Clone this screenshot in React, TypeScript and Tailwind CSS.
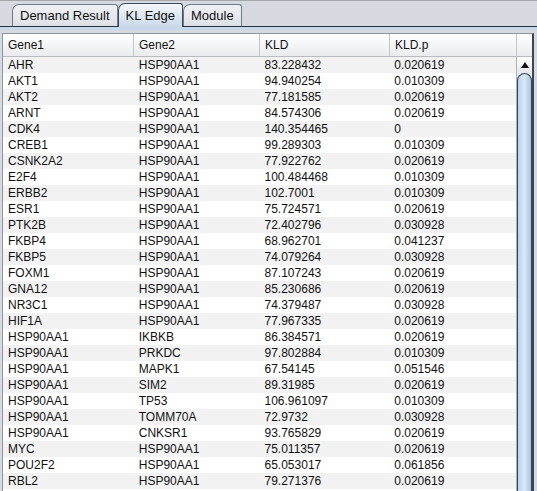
import React from 'react';

type Row = [string, string, string, string];

const rows: Row[] = [
  ['AHR', 'HSP90AA1', '83.228432', '0.020619'],
  ['AKT1', 'HSP90AA1', '94.940254', '0.010309'],
  ['AKT2', 'HSP90AA1', '77.181585', '0.020619'],
  ['ARNT', 'HSP90AA1', '84.574306', '0.020619'],
  ['CDK4', 'HSP90AA1', '140.354465', '0'],
  ['CREB1', 'HSP90AA1', '99.289303', '0.010309'],
  ['CSNK2A2', 'HSP90AA1', '77.922762', '0.020619'],
  ['E2F4', 'HSP90AA1', '100.484468', '0.010309'],
  ['ERBB2', 'HSP90AA1', '102.7001', '0.010309'],
  ['ESR1', 'HSP90AA1', '75.724571', '0.020619'],
  ['PTK2B', 'HSP90AA1', '72.402796', '0.030928'],
  ['FKBP4', 'HSP90AA1', '68.962701', '0.041237'],
  ['FKBP5', 'HSP90AA1', '74.079264', '0.030928'],
  ['FOXM1', 'HSP90AA1', '87.107243', '0.020619'],
  ['GNA12', 'HSP90AA1', '85.230686', '0.020619'],
  ['NR3C1', 'HSP90AA1', '74.379487', '0.030928'],
  ['HIF1A', 'HSP90AA1', '77.967335', '0.020619'],
  ['HSP90AA1', 'IKBKB', '86.384571', '0.020619'],
  ['HSP90AA1', 'PRKDC', '97.802884', '0.010309'],
  ['HSP90AA1', 'MAPK1', '67.54145', '0.051546'],
  ['HSP90AA1', 'SIM2', '89.31985', '0.020619'],
  ['HSP90AA1', 'TP53', '106.961097', '0.010309'],
  ['HSP90AA1', 'TOMM70A', '72.9732', '0.030928'],
  ['HSP90AA1', 'CNKSR1', '93.765829', '0.020619'],
  ['MYC', 'HSP90AA1', '75.011357', '0.020619'],
  ['POU2F2', 'HSP90AA1', '65.053017', '0.061856'],
  ['RBL2', 'HSP90AA1', '79.271376', '0.020619'],
];

const columns = [
  { name: 'Gene1', w: 'w-[131px]' },
  { name: 'Gene2', w: 'w-[126px]' },
  { name: 'KLD', w: 'w-[130px]' },
  { name: 'KLD.p', w: 'w-[127px]' },
];

function Tab({ label, selected }: { label: string; selected?: boolean }) {
  if (selected) {
    return (
      <div className="relative -mb-px flex h-[24px] items-center rounded-tl-[7px] rounded-tr-[3px] border border-b-0 border-[#3c4a58] bg-gradient-to-b from-[#f4f7fa] to-[#c9d9e8] px-[7px] text-[13px] text-[#111]">
        {label}
      </div>
    );
  }
  return (
    <div className="flex h-[22px] items-center rounded-tl-[7px] rounded-tr-[3px] border border-b-0 border-[#6f7c88] bg-gradient-to-b from-[#eef0f3] to-[#dde1e6] px-[7px] text-[13px] text-[#111]">
      {label}
    </div>
  );
}

function ScrollBar() {
  return (
    <div className="flex w-[16px] flex-col border-l border-[#a8b0b8] bg-[#eef0f3]">
      <div className="flex h-[16px] items-center justify-center bg-gradient-to-b from-[#ffffff] to-[#e4e8ec]">
        <svg width="8" height="6" viewBox="0 0 8 6">
          <path d="M4 0 L8 6 L0 6 Z" fill="#111" />
        </svg>
      </div>
      <div className="flex-1 rounded-t-[10px] border border-b-0 border-[#33475b] bg-gradient-to-r from-[#b9d2ea] via-[#d9e8f6] to-[#a9c4df]" />
    </div>
  );
}

export default function App() {
  return (
    <div className="flex h-[491px] w-[537px] flex-col overflow-hidden border-t border-[#a4a7ab] bg-[#d6d9df] font-['Liberation_Sans',Arial,sans-serif]">
      {/* tab strip */}
      <div className="flex h-[25px] items-end pl-[12px]">
        <Tab label="Demand Result" />
        <Tab label="KL Edge" selected />
        <Tab label="Module" />
      </div>
      <div className="h-px bg-[#24313f]" />
      <div className="h-[3px] bg-[#c6d8ea]" />
      <div className="h-[3px]" />

      {/* table */}
      <div className="ml-[2px] mr-[3px] flex min-h-0 flex-1 flex-col border border-r-2 border-b-0 border-[#8d969f] border-r-[#3b4652] bg-white">
        <div className="flex h-[23px] border-b border-[#b8bcc1] bg-gradient-to-b from-[#ffffff] to-[#e9ebee] text-[12px] text-[#111]">
          {columns.map((c) => (
            <div
              key={c.name}
              className={`${c.w} flex items-center border-r border-[#c3c7cc] pl-[5px]`}
            >
              {c.name}
            </div>
          ))}
          <div className="flex-1" />
        </div>
        <div className="flex min-h-0 flex-1">
          <div className="flex-1 overflow-hidden">
            {rows.map((r, i) => (
              <div
                key={i}
                className={`flex h-[16px] items-center text-[12px] text-[#111] ${
                  i % 2 === 0 ? 'bg-[#f2f2f2]' : 'bg-white'
                }`}
              >
                {r.map((cell, j) => (
                  <div key={j} className={`${columns[j].w} pl-[5px] leading-[16px]`}>
                    {cell}
                  </div>
                ))}
              </div>
            ))}
          </div>
          <ScrollBar />
        </div>
      </div>
    </div>
  );
}
